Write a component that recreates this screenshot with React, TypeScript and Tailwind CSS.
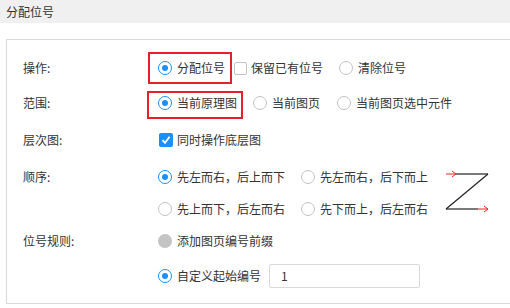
import React from 'react';

const Radio = ({ checked, disabled }: { checked?: boolean; disabled?: boolean }) => {
  if (disabled) return <span className="w-[14px] h-[14px] rounded-full bg-[#c4c4c4] shrink-0" />;
  return (
    <span
      className={`w-[14px] h-[14px] rounded-full border flex items-center justify-center shrink-0 bg-white ${
        checked ? 'border-[#1890ff]' : 'border-[#c2c2c2]'
      }`}
    >
      {checked && <span className="w-[6px] h-[6px] rounded-full bg-[#1890ff]" />}
    </span>
  );
};

const Check = ({ checked }: { checked?: boolean }) =>
  checked ? (
    <span className="w-[14px] h-[14px] rounded-[2px] bg-[#1890ff] flex items-center justify-center shrink-0">
      <svg width="10" height="10" viewBox="0 0 10 10">
        <polyline points="1.5,5.2 4,7.8 8.6,1.8" fill="none" stroke="white" strokeWidth="1.8" />
      </svg>
    </span>
  ) : (
    <span className="w-[13px] h-[13px] rounded-[2px] border border-[#c2c2c2] bg-white shrink-0" />
  );

const Option = ({
  type = 'radio',
  checked,
  disabled,
  text,
  className = '',
  children,
}: {
  type?: 'radio' | 'check';
  checked?: boolean;
  disabled?: boolean;
  text: string;
  className?: string;
  children?: React.ReactNode;
}) => (
  <label className={`relative flex items-center h-[18px] whitespace-nowrap ${type === 'radio' ? 'gap-[5px]' : 'gap-[4px]'} ${className}`}>
    {type === 'radio' ? <Radio checked={checked} disabled={disabled} /> : <Check checked={checked} />}
    <span>{text}</span>
    {children}
  </label>
);

const Row = ({ label, h, children }: { label?: string; h: string; children: React.ReactNode }) => (
  <div className={`flex items-center ${h}`}>
    <div className="w-[135px] shrink-0">{label}</div>
    {children}
  </div>
);

const ZOrder = () => (
  <svg width="54" height="64" viewBox="0 0 54 64" className="shrink-0">
    <line x1="5" y1="15" x2="15" y2="15" stroke="#ff2020" strokeWidth="1" />
    <polyline points="11,12 15,15 11,18" fill="none" stroke="#ff2020" strokeWidth="1" />
    <line x1="15" y1="15" x2="47" y2="15" stroke="#222" strokeWidth="1.2" />
    <line x1="47" y1="15" x2="5" y2="50" stroke="#222" strokeWidth="1.2" />
    <line x1="5" y1="50" x2="37" y2="50" stroke="#222" strokeWidth="1.2" />
    <line x1="37" y1="50" x2="47" y2="50" stroke="#ff2020" strokeWidth="1" />
    <polyline points="43,47 47,50 43,53" fill="none" stroke="#ff2020" strokeWidth="1" />
  </svg>
);

export default function App() {
  return (
    <div
      className="w-[510px] h-[308px] overflow-hidden bg-white text-[12px] text-[#333]"
      style={{ fontFamily: '"Noto Sans CJK SC", "Noto Sans", sans-serif' }}
    >
      <div className="h-[23px] bg-[#f0f0f0] flex items-center pl-[6px]">分配位号</div>

      <div className="ml-[6px] mt-[16px] w-[540px] border border-[#d9d9d9] pl-[16px] pt-[11px] pb-[10px]">
        <Row label="操作:" h="h-[34px]">
          <Option checked text="分配位号">
            <span className="absolute -left-[10px] -right-[7px] -top-[7px] -bottom-[7px] border-2 border-[#e8202a]" />
          </Option>
          <Option type="check" text="保留已有位号" className="ml-[9px]" />
          <Option text="清除位号" className="ml-[16px]" />
        </Row>

        <Row label="范围:" h="h-[36px]">
          <Option checked text="当前原理图">
            <span className="absolute -left-[11px] -right-[6px] -top-[3px] -bottom-[7px] border-2 border-[#e8202a]" />
          </Option>
          <Option text="当前图页" className="ml-[16px]" />
          <Option text="当前图页选中元件" className="ml-[17px]" />
        </Row>

        <Row label="层次图:" h="h-[38px]">
          <Option type="check" checked text="同时操作底层图" className="ml-[1px]" />
        </Row>

        <div className="flex h-[64px]">
          <div className="w-[135px] shrink-0 h-[36px] flex items-center">顺序:</div>
          <div className="flex flex-col w-[283px] shrink-0">
            <div className="flex items-center h-[36px]">
              <Option checked text="先左而右，后上而下" className="w-[143px]" />
              <Option text="先左而右，后下而上" />
            </div>
            <div className="flex items-center h-[28px]">
              <Option text="先上而下，后左而右" className="w-[143px]" />
              <Option text="先下而上，后左而右" />
            </div>
          </div>
          <ZOrder />
        </div>

        <Row label="位号规则:" h="h-[36px]">
          <Option disabled text="添加图页编号前缀" />
        </Row>

        <Row h="h-[34px]">
          <Option checked text="自定义起始编号" />
          <div className="ml-[8px] w-[151px] h-[24px] border border-[#d9d9d9] rounded-[2px] flex items-center pl-[11px]">
            1
          </div>
        </Row>
      </div>
    </div>
  );
}
